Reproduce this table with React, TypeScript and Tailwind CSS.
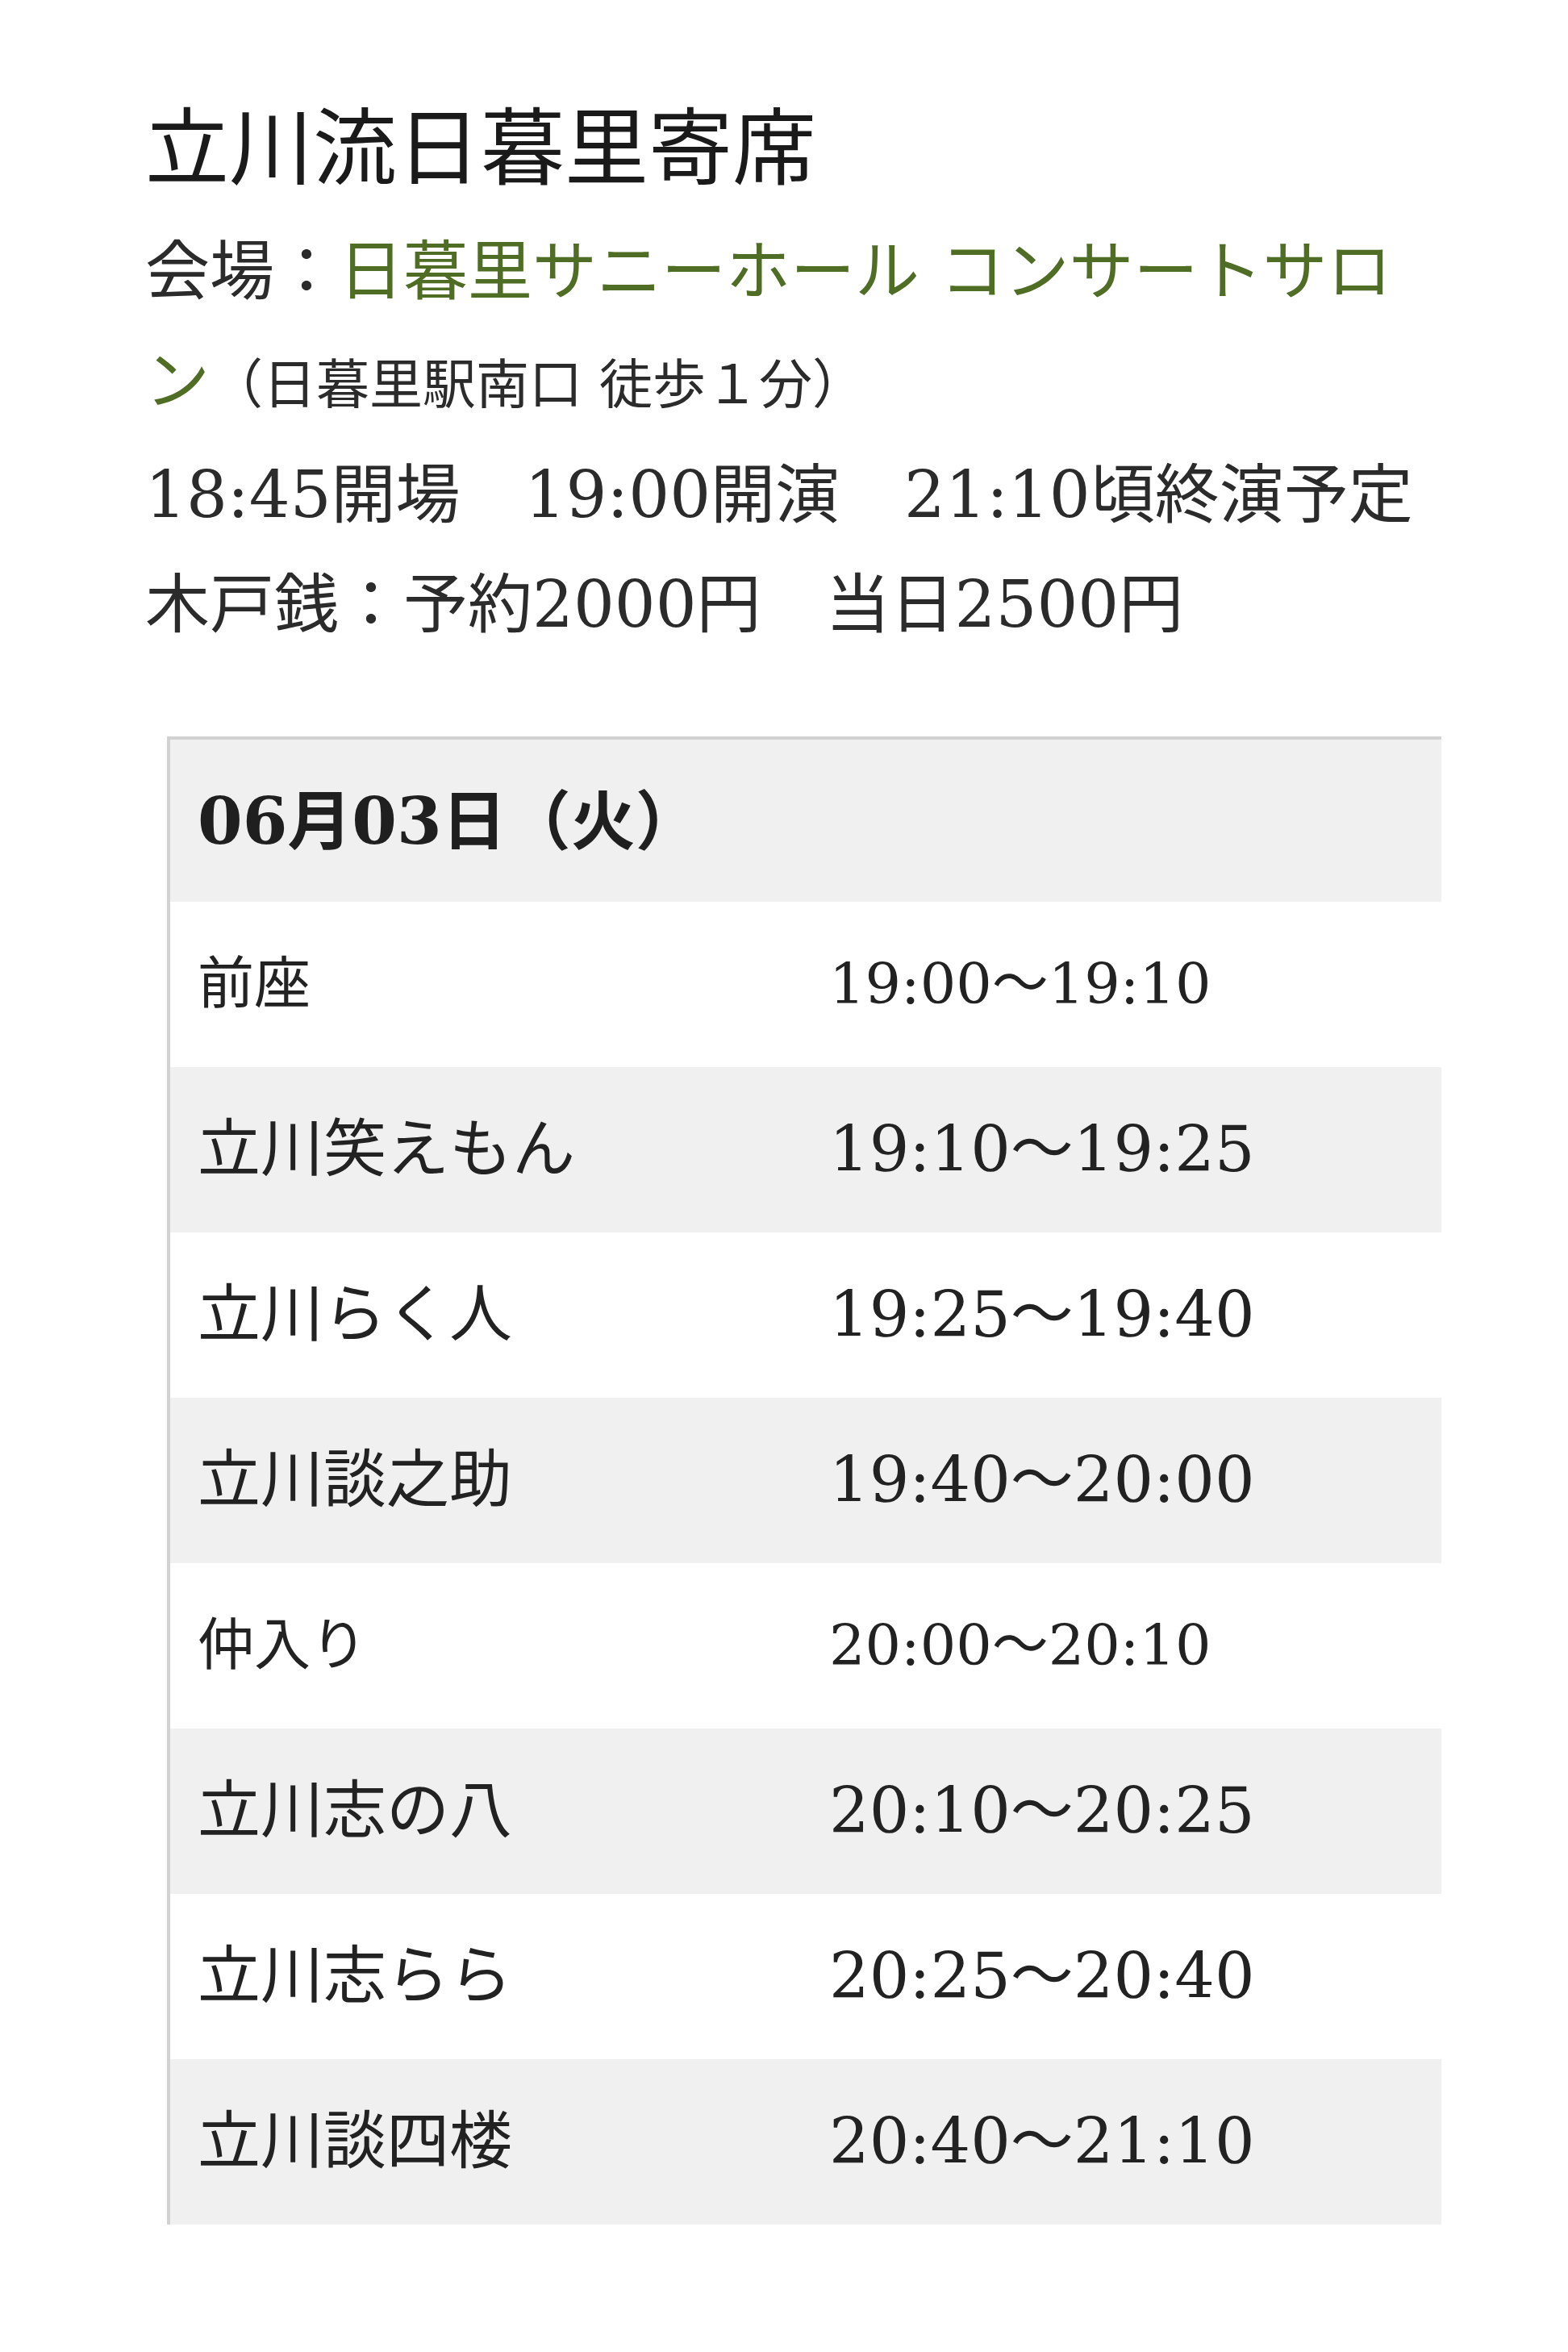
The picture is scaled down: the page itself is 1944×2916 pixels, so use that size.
import React from "react";

type Row = { name: string; time: string; big: boolean };

const rows: Row[] = [
  { name: "前座", time: "19:00～19:10", big: false },
  { name: "立川笑えもん", time: "19:10～19:25", big: true },
  { name: "立川らく人", time: "19:25～19:40", big: true },
  { name: "立川談之助", time: "19:40～20:00", big: true },
  { name: "仲入り", time: "20:00～20:10", big: false },
  { name: "立川志の八", time: "20:10～20:25", big: true },
  { name: "立川志らら", time: "20:25～20:40", big: true },
  { name: "立川談四楼", time: "20:40～21:10", big: true },
];

export default function App() {
  return (
    <div className="min-h-[2916px] w-[1944px] bg-white font-['DejaVu_Serif','Noto_Sans_CJK_JP',serif] text-[#222222]">
      <div className="ml-[180px] w-[1607px] pt-[110px]">
        <h1 className="text-[104px] font-normal leading-[150px] text-[#1a1a1a]">
          立川流日暮里寄席
        </h1>
        <p className="mt-[9px] text-[80px] leading-[136px] text-[#2b2b2b]">
          会場：
          <span className="text-[#4f6d24]">日暮里サニーホール コンサートサロ</span>
          <span className="text-[#4f6d24]">ン</span>
          <span className="text-[66px]">（日暮里駅南口 徒歩１分）</span>
          <br />
          18:45開場　19:00開演　21:10頃終演予定
          <br />
          木戸銭：予約2000円　当日2500円
        </p>

        <div className="ml-[27px] mt-[95px] border-l-[4px] border-t-[4px] border-[#d2d2d2]">
          <div className="flex h-[201px] items-center bg-[#f0f0f0] pl-[34px] text-[80px] font-bold text-[#1f1f1f]">
            06月03日（火）
          </div>
          {rows.map((r, i) => (
            <div
              key={r.name}
              className={`grid h-[205px] grid-cols-[783px_1fr] items-center ${
                i % 2 === 1 ? "bg-[#f0f0f0]" : "bg-white"
              } ${r.big ? "text-[78px]" : "text-[70px]"}`}
            >
              <div className="pl-[34px]">{r.name}</div>
              <div className="pl-[34px]">{r.time}</div>
            </div>
          ))}
        </div>
      </div>
    </div>
  );
}
